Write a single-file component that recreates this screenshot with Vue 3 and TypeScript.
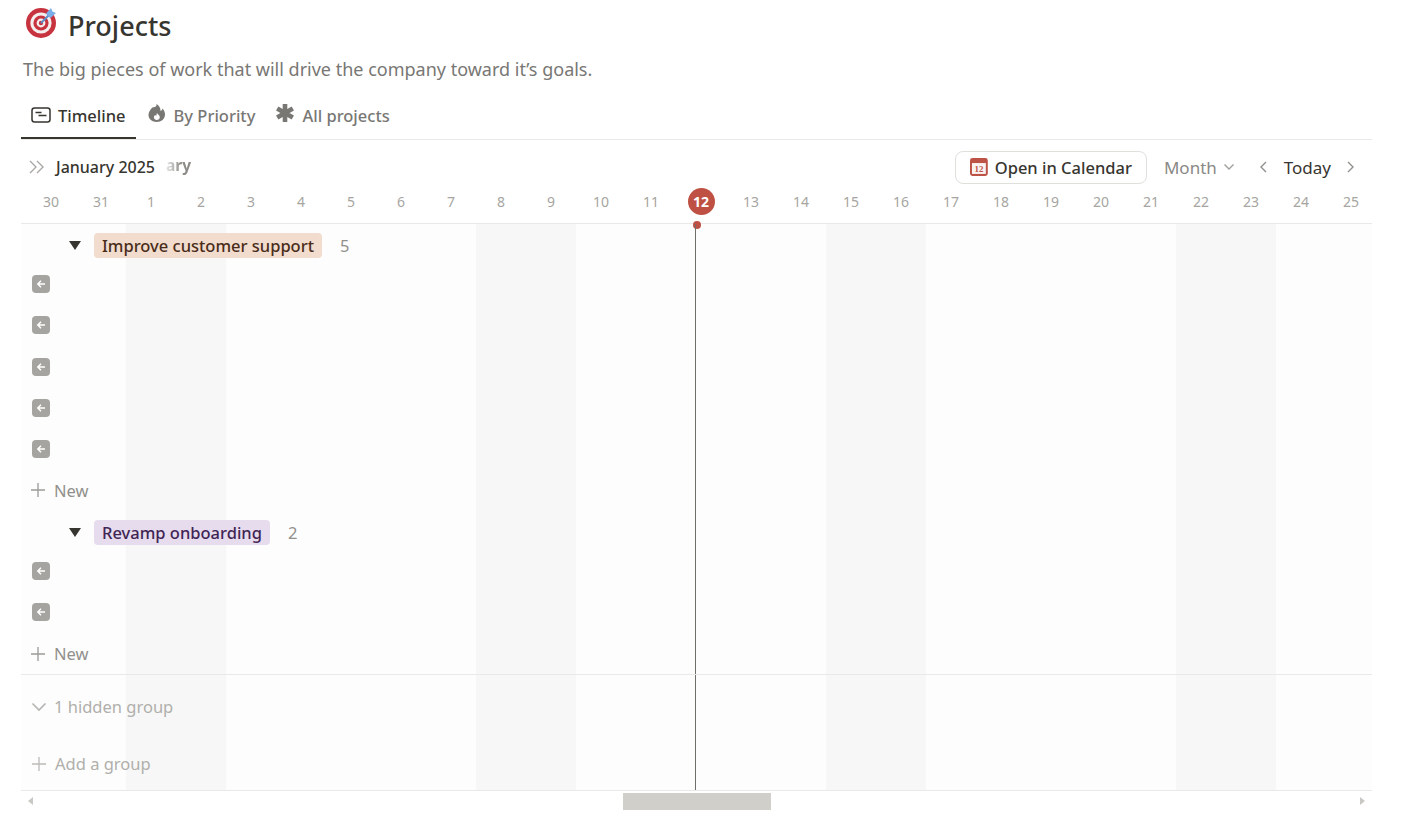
<script setup lang="ts">
interface Group {
  name: string
  count: number
  rows: number
  tone: string
}

const days = [30, 31, ...Array.from({ length: 25 }, (_, i) => i + 1)]
// 每周末两列带灰底
const weekend = (i: number) => i >= 2 && (i - 2) % 7 < 2

const groups: Group[] = [
  { name: 'Improve customer support', count: 5, rows: 5, tone: 'peach' },
  { name: 'Revamp onboarding', count: 2, rows: 2, tone: 'purple' },
]
</script>

<template>
  <div class="page">
    <h1 class="title">
      <svg class="target" width="34" height="34" viewBox="0 0 34 34">
        <circle cx="16" cy="18" r="15" fill="#c7343f" />
        <circle cx="16" cy="18" r="10.6" fill="#f4efee" />
        <circle cx="16" cy="18" r="7.6" fill="#c7343f" />
        <circle cx="16" cy="18" r="4.4" fill="#f4efee" />
        <circle cx="16" cy="18" r="2.2" fill="#c7343f" />
        <path d="M16 18 25 9" stroke="#5c8fc9" stroke-width="2" />
        <path d="M21 8.5 26 3l1.5 3.6L31 8l-5.500 5z" fill="#7aaee8" />
      </svg>
      <span>Projects</span>
    </h1>
    <p class="desc">The big pieces of work that will drive the company toward it’s goals.</p>

    <div class="tabs">
      <div class="tab tab--active">
        <svg width="20" height="16" viewBox="0 0 20 16" fill="none" stroke="#37352f">
          <rect x="1" y="1" width="18" height="14" rx="2.500" stroke-width="1.500" />
          <path d="M4.500 5.500h6M7.500 8.500h8" stroke-width="1.400" />
        </svg>
        Timeline
      </div>
      <div class="tab">
        <svg class="tab__icon" width="20" height="20" viewBox="0 0 20 20">
          <path
            fill="#787774"
            fill-rule="evenodd"
            d="M9.500 1C10 4 7.500 4.500 5.800 4.200 3.500 6 1.500 9 1.500 12c0 4 3.500 7 8.200 7s8.300-3 8.300-7.500c0-2.500-1-4.500-2.500-6-.3 1.500-1 2.200-2 2.500C13.700 5 12 2.500 9.500 1zM10 10c.4 1.500 2.800 2 2.800 4.300 0 1.600-1.300 2.700-3 2.700s-2.900-1.200-2.900-2.700c0-1.300.8-2 1.500-2.400.1.600.4 1 .8 1.100C9.400 12 9.500 11 10 10z"
          />
        </svg>
        By Priority
      </div>
      <div class="tab">
        <svg class="tab__icon" width="20" height="20" viewBox="0 0 20 20" stroke="#787774" stroke-width="4.600">
          <path d="M10 1v18M2.200 5.500l15.600 9M17.800 5.500l-15.600 9" />
        </svg>
        All projects
      </div>
    </div>

    <div class="toolbar">
      <div class="toolbar__left">
        <svg width="18" height="14" viewBox="0 0 18 14" fill="none" stroke="#a9a8a4" stroke-width="1.400">
          <path d="M2 1l6 6-6 6M9 1l6 6-6 6" />
        </svg>
        <span class="month">January 2025</span>
        <span class="ghost">ary</span>
      </div>
      <div class="toolbar__right">
        <button class="cal-btn">
          <svg width="18" height="18" viewBox="0 0 18 18">
            <rect width="18" height="18" rx="2.500" fill="#bd5347" />
            <rect x="2" y="5" width="14" height="11" fill="#fbf3f1" />
            <text x="9" y="14" text-anchor="middle" class="cal-num">12</text>
          </svg>
          Open in Calendar
        </button>
        <span class="range">
          Month
          <svg width="12" height="8" viewBox="0 0 12 8" fill="none" stroke="#a09f9b" stroke-width="1.400">
            <path d="M1.500 1.500 6 6l4.500-4.500" />
          </svg>
        </span>
        <svg width="9" height="12" viewBox="0 0 9 12" fill="none" stroke="#91908c" stroke-width="1.400">
          <path d="M7 1 2 6l5 5" />
        </svg>
        <span class="today">Today</span>
        <svg width="9" height="12" viewBox="0 0 9 12" fill="none" stroke="#91908c" stroke-width="1.400">
          <path d="M2 1l5 5-5 5" />
        </svg>
      </div>
    </div>

    <div class="dates">
      <span v-for="d in days" :key="d" class="date" :class="{ 'date--today': d === 12 }">
        <b v-if="d === 12">{{ d }}</b>
        <template v-else>{{ d }}</template>
      </span>
    </div>

    <div class="board">
      <div class="board__cols">
        <div v-for="(d, i) in days" :key="d" class="col" :class="{ 'col--weekend': weekend(i) }"></div>
      </div>
      <div class="now-dot"></div>
      <div class="now-line"></div>

      <div class="board__groups">
        <section v-for="g in groups" :key="g.name" class="group">
          <div class="row group__head">
            <span class="caret"></span>
            <span class="pill" :class="`pill--${g.tone}`">{{ g.name }}</span>
            <span class="count">{{ g.count }}</span>
          </div>
          <div v-for="n in g.rows" :key="n" class="row">
            <span class="back">
              <svg width="10" height="10" viewBox="0 0 10 10" fill="none" stroke="#fff" stroke-width="1.500">
                <path d="M9 5H2M5 1.800 1.800 5 5 8.200" />
              </svg>
            </span>
          </div>
          <div class="row row--new">
            <svg width="16" height="16" viewBox="0 0 16 16" stroke="#9b9a97" stroke-width="1.300">
              <path d="M8 1v14M1 8h14" />
            </svg>
            New
          </div>
        </section>

        <div class="foot">
          <div class="foot__item foot__hidden">
            <svg width="16" height="10" viewBox="0 0 16 10" fill="none" stroke="#b5b4b0" stroke-width="1.600">
              <path d="M1.500 1.500 8 8l6.500-6.500" />
            </svg>
            1 hidden group
          </div>
          <div class="foot__item foot__add">
            <svg width="16" height="16" viewBox="0 0 16 16" stroke="#bcbbb7" stroke-width="1.300">
              <path d="M8 1v14M1 8h14" />
            </svg>
            Add a group
          </div>
        </div>
      </div>
    </div>

    <div class="scrollbar">
      <span class="arrow arrow--left"></span>
      <span class="thumb"></span>
      <span class="arrow arrow--right"></span>
    </div>
  </div>
</template>

<style>
html,
body {
  background: #fff;
}
</style>

<style scoped>
.page {
  width: 1351px;
  height: 824px;
  margin-left: 21px;
  font-family: 'Noto Sans', Lato, sans-serif;
  color: #37352f;
  overflow: hidden;
}
.title {
  display: flex;
  align-items: center;
  gap: 9px;
  height: 50px;
  margin: 0;
  font-size: 27px;
  font-weight: 500;
}
.target {
  margin: -6px 0 0 4px;
}
.desc {
  margin: 0;
  height: 38px;
  line-height: 38px;
  font-size: 18px;
  color: #787774;
  padding-left: 2px;
}
.tabs {
  display: flex;
  height: 51px;
  border-bottom: 1px solid #e9e9e7;
  box-sizing: content-box;
}
.tab {
  display: flex;
  align-items: center;
  gap: 7px;
  height: 51px;
  padding: 3px 10px 0;
  box-sizing: border-box;
  font-size: 16.500px;
  font-weight: 500;
  color: #787774;
  white-space: nowrap;
}
.tab__icon {
  margin-top: -4px;
}
.tab--active {
  color: #37352f;
  border-bottom: 2px solid #37352f;
  padding-top: 5px;
  margin-right: 1px;
}
.toolbar {
  display: flex;
  justify-content: space-between;
  align-items: center;
  height: 54px;
  padding: 0 17px 0 7px;
  box-sizing: border-box;
}
.toolbar__left,
.toolbar__right {
  display: flex;
  align-items: center;
}
.month {
  margin-left: 10px;
  font-size: 16px;
  font-weight: 500;
}
.ghost {
  margin: -5px 0 0 11px;
  font-size: 15.500px;
  font-weight: 700;
  color: #8c8b87;
  -webkit-mask-image: linear-gradient(90deg, #0003, #000 60%);
  mask-image: linear-gradient(90deg, #0003, #000 60%);
}
.cal-btn {
  display: flex;
  align-items: center;
  gap: 7px;
  width: 192px;
  height: 33px;
  padding: 0 14px;
  background: #fff;
  border: 1px solid #e0dfdc;
  border-radius: 8px;
  font: 500 16.500px 'Noto Sans', Lato, sans-serif;
  color: #37352f;
  white-space: nowrap;
}
.cal-num {
  font: 700 9px 'Liberation Serif', serif;
  fill: #bd5347;
}
.range {
  display: flex;
  align-items: center;
  gap: 6px;
  margin: 0 24px 0 17px;
  font-size: 17px;
  color: #8a8986;
}
.today {
  margin: 0 15px 0 16px;
  font-size: 17px;
}
.dates {
  display: flex;
  padding-left: 5px;
  height: 35px;
  border-bottom: 1px solid #e9e9e7;
  margin-top: -6px;
  box-sizing: content-box;
  overflow: hidden;
}
.date {
  flex: 0 0 50px;
  text-align: center;
  font-size: 14px;
  line-height: 27px;
  color: #a6a5a1;
}
.date--today b {
  display: block;
  width: 27px;
  height: 27px;
  margin: 0 auto;
  border-radius: 50%;
  background: #bf5144;
  color: #fff;
  font-weight: 700;
  line-height: 27px;
}
.board {
  position: relative;
  height: 566px;
  background: #fdfdfd;
  border-bottom: 1px solid #e9e9e7;
}
.board__cols {
  position: absolute;
  inset: 0 0 0 5px;
  display: flex;
  overflow: hidden;
}
.col {
  flex: 0 0 50px;
}
.col--weekend {
  background: #f7f7f7;
}
.now-line {
  position: absolute;
  left: 674px;
  top: 0;
  bottom: 0;
  width: 1px;
  background: #6f6e6a;
}
.now-dot {
  position: absolute;
  left: 672px;
  top: -3px;
  width: 8px;
  height: 8px;
  border-radius: 50%;
  background: #bf5144;
}
.board__groups {
  position: relative;
}
.row {
  display: flex;
  align-items: center;
  height: 41.300px;
  padding-left: 11px;
  box-sizing: border-box;
}
.group__head {
  height: 39.300px;
  padding: 3.500px 0 0 48px;
}
.caret {
  width: 0;
  height: 0;
  border-left: 6px solid transparent;
  border-right: 6px solid transparent;
  border-top: 9px solid #37352f;
  margin-right: 13px;
}
.pill {
  height: 25px;
  line-height: 25px;
  padding: 0 8px;
  border-radius: 4px;
  font-size: 16.500px;
  font-weight: 500;
}
.pill--peach {
  background: #f1dccd;
  color: #4a2c1a;
}
.pill--purple {
  background: #e6dcee;
  color: #412454;
}
.count {
  margin-left: 18px;
  font-size: 16.500px;
  color: #91908c;
}
.back {
  display: flex;
  align-items: center;
  justify-content: center;
  width: 18px;
  height: 18px;
  border-radius: 4px;
  background: #a5a4a0;
}
.row--new {
  gap: 8px;
  padding-left: 9px;
  font-size: 16.500px;
  color: #91908c;
}
.foot {
  border-top: 1px solid #e9e9e7;
  padding-left: 9px;
  color: #b0afab;
  font-size: 16.500px;
}
.foot__item {
  display: flex;
  align-items: center;
  gap: 7px;
}
.foot__hidden {
  height: 63px;
  padding-left: 1px;
}
.foot__add {
  height: 51px;
  gap: 8px;
  padding-left: 1px;
}
.scrollbar {
  display: flex;
  justify-content: space-between;
  align-items: center;
  height: 20px;
  padding: 0 7px;
}
.thumb {
  width: 148px;
  height: 17px;
  background: #d0cfc9;
}
.arrow {
  width: 0;
  height: 0;
  border-top: 4px solid transparent;
  border-bottom: 4px solid transparent;
}
.arrow--left {
  border-right: 5px solid #c9c8c5;
}
.arrow--right {
  border-left: 5px solid #c9c8c5;
}
</style>
